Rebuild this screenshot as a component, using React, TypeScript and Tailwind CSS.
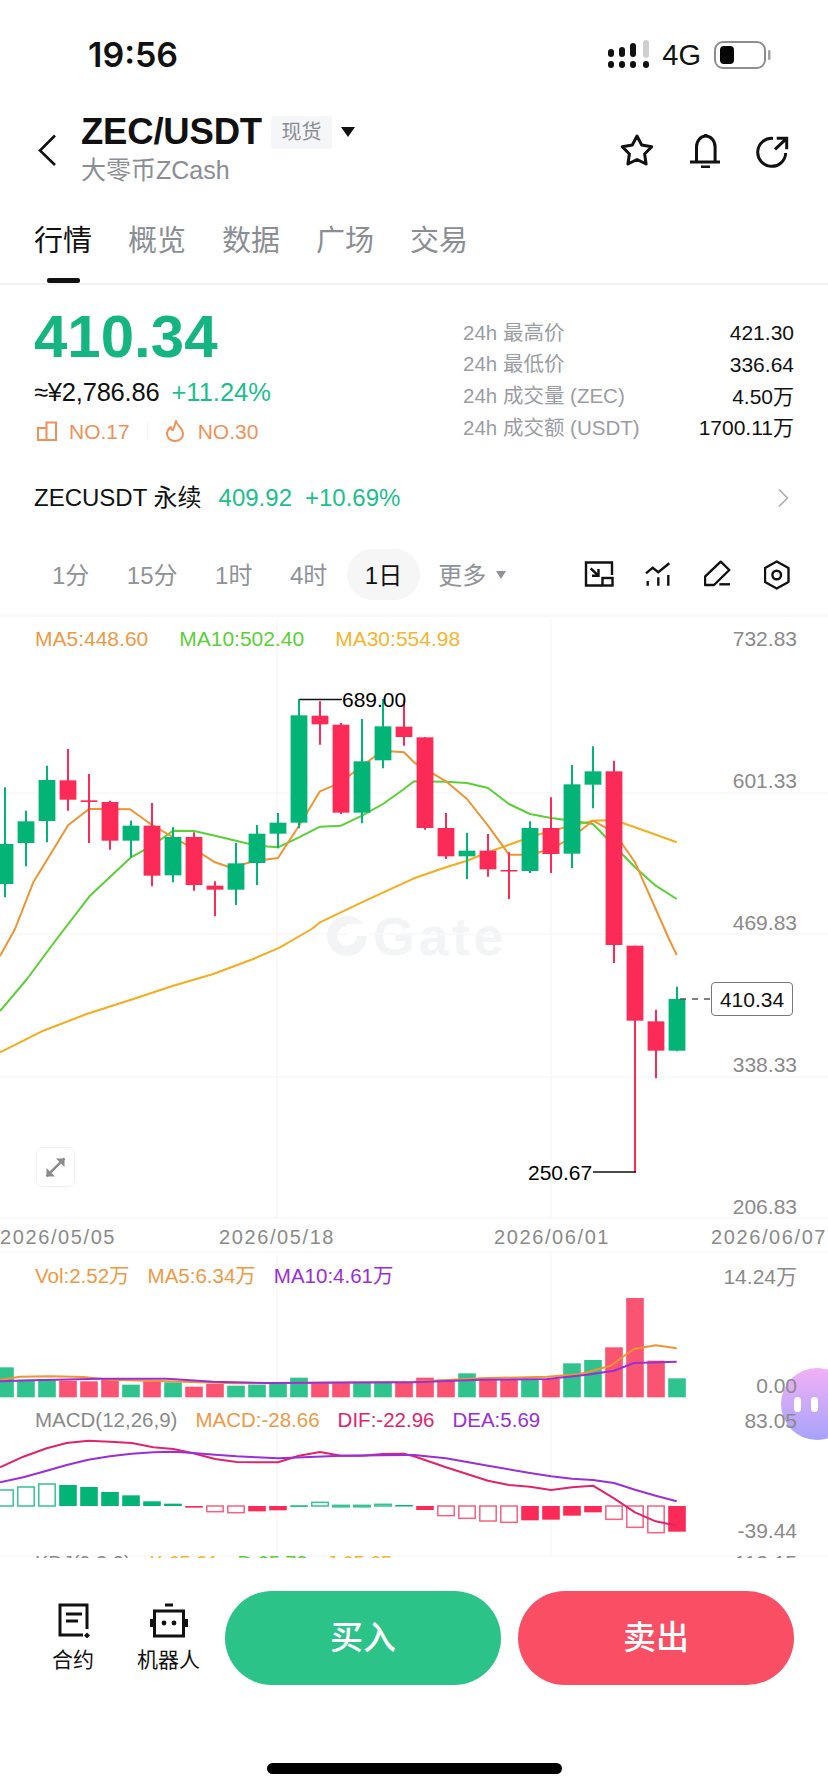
const UP = "#02b576"
const DOWN = "#fb2a57"
const VOL_UP = "#2fc48d"
const VOL_DOWN = "#fb5372"

// sampled off the 3x crops: x/3 + ox, y/3 + oy
type Pt = [number, number]
const toPath = (list: Pt[], ox = 0, oy = 620) =>
  list.map(([x, y]) => `${(x / 3 + ox).toFixed(1)},${(y / 3 + oy).toFixed(1)}`).join(" ")

const join = (left: Pt[], right: Pt[], oy: number) => `${toPath(left, 0, oy)} ${toPath(right, 414, oy)}`

// up, wick top, body top, body bottom, wick bottom
const candles: [boolean, number, number, number, number][] = [
  [true, 505, 675, 795, 835],
  [true, 575, 607, 672, 742],
  [true, 440, 483, 606, 670],
  [false, 390, 484, 542, 575],
  [false, 465, 544, 549, 672],
  [false, 545, 549, 665, 692],
  [true, 605, 620, 665, 715],
  [false, 552, 620, 770, 802],
  [true, 625, 654, 769, 790],
  [false, 640, 654, 798, 815],
  [false, 787, 800, 812, 892],
  [true, 672, 733, 812, 858],
  [true, 618, 644, 732, 798],
  [true, 582, 611, 644, 688],
  [true, 240, 289, 611, 628],
  [false, 247, 290, 316, 377],
  [false, 312, 317, 581, 585],
  [true, 300, 427, 581, 613],
  [true, 240, 322, 424, 448],
  [false, 245, 323, 354, 380],
  [false, 355, 355, 627, 632],
  [false, 582, 627, 712, 720],
  [true, 642, 695, 712, 780],
  [false, 645, 695, 751, 773],
  [false, 700, 753, 757, 840],
  [true, 607, 627, 756, 762],
  [false, 535, 627, 705, 762],
  [true, 438, 496, 704, 748],
  [true, 382, 457, 497, 568],
  [false, 425, 457, 978, 1032],
  [false, 980, 980, 1205, 1660],
  [false, 1172, 1207, 1295, 1378],
  [true, 1103, 1140, 1295, 1297],
]

const ma5 = `0,957 15,930 ${toPath([
  [100, 790], [205, 618], [267, 570], [330, 570], [390, 571], [456, 618], [520, 655], [582, 690], [645, 730], [690, 745], [771, 725], [834, 717], [897, 620], [960, 517], [1023, 490], [1086, 440], [1149, 395], [1212, 400],
])} ${toPath([
  [0, 430], [96, 487], [159, 540], [222, 620], [285, 707], [348, 707], [411, 690], [474, 655], [537, 605], [600, 640], [663, 730], [765, 960], [788, 1008],
], 414)}`

const ma10 = `0,1012 27,980 ${toPath([
  [170, 960], [270, 830], [393, 715], [456, 680], [519, 635], [582, 636], [645, 650], [708, 665], [771, 680], [834, 685], [897, 655], [960, 623], [1023, 620], [1086, 590], [1149, 555], [1212, 510],
])} ${toPath([
  [0, 487], [96, 488], [159, 492], [222, 507], [285, 555], [348, 585], [411, 597], [474, 605], [537, 615], [600, 680], [663, 745], [725, 800], [788, 840],
], 414)}`

const ma30 = `${toPath([
  [0, 370], [130, 305], [260, 255], [400, 210], [520, 170], [640, 135], [760, 90], [840, 55], [935, 0],
], 0, 930)} ${toPath([
  [960, 910], [1085, 850],
])} ${toPath([
  [0, 778], [96, 745], [159, 725], [222, 700], [285, 677], [348, 655], [411, 635], [474, 620], [537, 605], [600, 603], [663, 625], [788, 670],
], 414)}`

const volumes: [boolean, number][] = [
  [true, 445], [true, 482], [true, 480], [false, 485], [false, 487], [false, 480], [true, 497], [false, 487], [true, 490], [false, 503], [false, 495], [true, 500], [true, 497], [true, 495], [true, 476], [false, 490], [false, 492], [true, 492], [true, 490], [false, 490],
  [false, 476], [false, 482], [true, 463], [false, 482], [false, 483], [true, 483], [false, 480], [true, 433], [true, 423], [false, 385], [false, 237], [false, 425], [true, 478],
]

const volMa5 = join(
  [[0, 482], [60, 473], [150, 472], [250, 474], [330, 482], [450, 485], [600, 490], [700, 493], [860, 492], [1242, 488]],
  [[200, 478], [400, 473], [500, 465], [590, 440], [625, 415], [660, 390], [725, 379], [788, 388]],
  1220,
)
const volMa10 = join(
  [[0, 487], [100, 484], [300, 479], [500, 479], [640, 488], [800, 492], [1242, 490]],
  [[200, 482], [400, 480], [520, 467], [600, 455], [660, 432], [788, 428]],
  1220,
)
const dif = join(
  [[0, 745], [70, 713], [140, 688], [200, 672], [265, 665], [330, 668], [395, 672], [460, 685], [520, 690], [580, 703], [645, 720], [710, 729], [770, 730], [834, 730], [897, 710], [960, 699], [1023, 710], [1086, 710], [1149, 705], [1212, 704]],
  [[0, 712], [96, 745], [222, 785], [285, 798], [348, 803], [411, 813], [474, 805], [537, 800], [600, 838], [663, 880], [725, 907], [788, 920]],
  1220,
)
const dea = join(
  [[0, 790], [70, 775], [140, 755], [200, 738], [265, 722], [330, 712], [395, 704], [460, 700], [520, 698], [580, 702], [645, 707], [710, 712], [770, 715], [834, 718], [1023, 710], [1212, 708]],
  [[0, 708], [96, 718], [222, 740], [348, 762], [411, 772], [474, 779], [537, 783], [600, 792], [663, 812], [725, 830], [788, 847]],
  1220,
)

// up, hollow, far edge (the zero line is at 861)
const macd: [boolean, boolean, number][] = [
  [true, true, 813], [true, true, 804], [true, true, 795], [true, false, 798], [true, false, 804], [true, false, 819], [true, false, 829], [true, false, 847], [true, false, 854], [false, false, 866], [false, true, 878], [false, true, 881], [false, false, 877], [false, false, 874], [true, false, 859], [true, true, 850], [true, true, 859], [true, true, 859], [true, true, 856], [true, false, 858],
  [false, false, 873], [false, true, 890], [false, true, 898], [false, true, 906], [false, true, 910], [false, false, 904], [false, false, 902], [false, false, 890], [false, false, 880], [false, true, 901], [false, true, 925], [false, true, 941], [false, false, 938],
]

function ChartDrawing() {
  return (
    <svg className="absolute inset-0" width="828" height="941" viewBox="0 618 828 941" fill="none">
      <g stroke="#f8f8f9" strokeWidth="1.5">
        <path d="M0 794H828M0 935H828M0 1078H828M0 1219H828M0 1253H828M0 1557H828" />
        <path d="M277 620V1219M551 620V1219M277 1253V1557M551 1253V1557" />
      </g>
      <circle cx="347" cy="937" r="15" stroke="#f3f4f5" strokeWidth="10" />
      <rect x="347" y="925" width="22" height="12" fill="#ffffff" />

      <polyline points={ma30} stroke="#f5ac1e" strokeWidth="2" strokeLinejoin="round" />
      <polyline points={ma10} stroke="#5bcf36" strokeWidth="2" strokeLinejoin="round" />
      <polyline points={ma5} stroke="#ee9433" strokeWidth="2" strokeLinejoin="round" />

      {candles.map(([up, wt, bt, bb, wb], i) => {
        const x = 5 + 21 * i
        const color = up ? UP : DOWN
        return (
          <g key={i}>
            <line x1={x} x2={x} y1={620 + wt / 3} y2={620 + wb / 3} stroke={color} strokeWidth="2" />
            <rect x={x - 8.4} y={620 + bt / 3} width="16.8" height={Math.max((bb - bt) / 3, 1.5)} fill={color} />
          </g>
        )
      })}

      <path d="M299 700.5H342M593 1173H636" stroke="#111111" strokeWidth="1.5" />
      <path d="M299 700.5V712" stroke={UP} strokeWidth="2" />
      <path d="M680 1000H711" stroke="#555555" strokeWidth="1.5" strokeDasharray="6 6" />

      {volumes.map(([up, top], i) => (
        <rect key={i} x={5 + 21 * i - 8.8} y={1220 + top / 3} width="17.6" height={(535 - top) / 3} fill={up ? VOL_UP : VOL_DOWN} />
      ))}
      <polyline points={volMa5} stroke="#ee9433" strokeWidth="2" strokeLinejoin="round" />
      <polyline points={volMa10} stroke="#9a2fd6" strokeWidth="2" strokeLinejoin="round" />

      {macd.map(([up, hollow, edge], i) => {
        const top = Math.min(edge, 861)
        const h = Math.max(Math.abs(edge - 861) / 3, 1.5)
        const color = up ? UP : DOWN
        return hollow ? (
          <rect key={i} x={5 + 21 * i - 8.2} y={1220 + top / 3} width="16.4" height={h} stroke={up ? "#35c493" : "#f5617f"} strokeWidth="1.5" fill="#ffffff" />
        ) : (
          <rect key={i} x={5 + 21 * i - 8.8} y={1220 + top / 3} width="17.6" height={h} fill={color} />
        )
      })}
      <polyline points={dif} stroke="#e0246c" strokeWidth="2" strokeLinejoin="round" />
      <polyline points={dea} stroke="#9a2fd6" strokeWidth="2" strokeLinejoin="round" />
    </svg>
  )
}

function StatusIcons() {
  return (
    <div className="flex items-center">
      <svg width="42" height="30" viewBox="606 41 42 30">
        <rect x="641" y="41" width="6" height="18" rx="3" fill="#cfcfcf" />
        <rect x="628" y="44" width="6" height="14" rx="3" fill="#111" />
        <rect x="617" y="48" width="6" height="10" rx="3" fill="#111" />
        <rect x="606" y="50" width="6" height="8" rx="3" fill="#111" />
        <rect x="606" y="62" width="6" height="7" rx="3" fill="#111" />
        <rect x="617" y="62" width="6" height="7" rx="3" fill="#111" />
        <rect x="628" y="62" width="6" height="7" rx="3" fill="#111" />
        <rect x="641" y="62" width="6" height="7" rx="3" fill="#111" />
      </svg>
      <span className="ml-[12px] text-[29px] leading-none text-[#111]">4G</span>
      <svg className="ml-[13px]" width="57" height="28" viewBox="0 0 57 28">
        <rect x="1" y="1" width="50" height="26" rx="8" fill="none" stroke="#8e8e8e" strokeWidth="2" />
        <rect x="6" y="5" width="14" height="18" rx="4" fill="#050505" />
        <rect x="54" y="9" width="2.5" height="10" rx="1.2" fill="#a0a0a0" />
      </svg>
    </div>
  )
}

function HeaderIcons() {
  return (
    <div className="flex items-center gap-[32px] pr-[37px]">
      <svg width="36" height="36" viewBox="0 0 36 36" fill="none" stroke="#111" strokeWidth="3" strokeLinejoin="round">
        <path d="M18 4L22.7 13L32.7 14.7L25.6 22L27.1 32L18 27.5L8.9 32L10.4 22L3.3 14.7L13.3 13Z" />
      </svg>
      <svg width="36" height="36" viewBox="0 0 36 36" fill="none" stroke="#111" strokeWidth="3">
        <path d="M9.5 30V15a9.3 11 0 0 1 18.6 0V30" />
        <path d="M3 30H33M14 35H23M18.7 2V4.5" />
      </svg>
      <svg width="36" height="36" viewBox="0 0 36 36" fill="none" stroke="#111" strokeWidth="3">
        <path d="M18 6.4A14 14 0 1 0 30.7 21" />
        <path d="M20 17.3L31.7 6.3M21.7 6.3H31.7V17.3" />
      </svg>
    </div>
  )
}

function ToolIcons() {
  return (
    <div className="ml-auto flex items-center gap-[30px] pr-[34px]">
      <svg width="30" height="30" viewBox="0 0 30 30" fill="none" stroke="#111" strokeWidth="2.4">
        <path d="M18 25.5H2V2.5H28V15" />
        <rect x="18.5" y="18" width="10" height="7.5" />
        <path d="M6.7 8.3L14.3 15.7M8 15.7H14.5V9" />
      </svg>
      <svg width="30" height="30" viewBox="0 0 30 30" fill="none" stroke="#111" strokeWidth="2.4">
        <path d="M2 13.3L8.7 7.7L14.3 12.3L25.3 3.3" />
        <path d="M3.7 21V25.7M14.3 17.3V25.7M24.3 15V25.7" />
      </svg>
      <svg width="30" height="30" viewBox="0 0 30 30" fill="none" stroke="#111" strokeWidth="2.4" strokeLinejoin="round">
        <path d="M1 25V16.7L16.7 1.7L25.3 10L10 25Z" />
        <path d="M15.3 24.3H26" />
      </svg>
      <svg width="30" height="30" viewBox="0 0 30 30" fill="none" stroke="#111" strokeWidth="2.4" strokeLinejoin="round">
        <path d="M12.7 1.5L24.5 8V22L12.7 28.5L1 22V8Z" />
        <circle cx="12.7" cy="15" r="4.3" />
      </svg>
    </div>
  )
}

const stats = [
  ["24h 最高价", "421.30"],
  ["24h 最低价", "336.64"],
  ["24h 成交量 (ZEC)", "4.50万"],
  ["24h 成交额 (USDT)", "1700.11万"],
]

const intervals = ["1分", "15分", "1时", "4时"]

export default function App() {
  return (
    <div className="relative h-[1792px] w-[828px] overflow-hidden bg-white font-['Liberation_Sans','Noto_Sans_CJK_SC',sans-serif] text-[#111]">
      <div className="flex h-[110px] items-center justify-between pr-[57px] pl-[88px]">
        <span className="font-['Inter',sans-serif] text-[34px] leading-none font-semibold">19:56</span>
        <StatusIcons />
      </div>

      <div className="flex h-[80px] items-center justify-between">
        <div className="flex items-center">
          <svg className="ml-[37px]" width="20" height="32" viewBox="0 0 20 32" fill="none" stroke="#111" strokeWidth="2.6">
            <path d="M18 1.5L3 16.5L18 31" />
          </svg>
          <div className="ml-[24px] flex flex-col">
            <div className="-mt-[3px] flex h-[40px] items-center">
              <span className="text-[36.5px] leading-none font-bold tracking-[-0.2px]">ZEC/USDT</span>
              <span className="ml-[9px] flex h-[33px] w-[61px] items-center justify-center rounded-[4px] bg-[#f5f6f7] text-[20px] text-[#8a8e94]">现货</span>
              <span className="ml-[9px] h-0 w-0 border-x-[7px] border-t-[10px] border-x-transparent border-t-[#111]" />
            </div>
            <span className="mt-[3px] text-[25px] leading-[30px] text-[#8a8e94]">大零币ZCash</span>
          </div>
        </div>
        <HeaderIcons />
      </div>

      <div className="relative h-[95px] border-b-2 border-[#f3f3f4]">
        <div className="flex gap-[36px] pt-[35px] pl-[34px] text-[29px] leading-[32px] text-[#8a8e94]">
          <span className="text-[#111]">行情</span>
          <span>概览</span>
          <span>数据</span>
          <span>广场</span>
          <span>交易</span>
        </div>
        <div className="ml-[47px] mt-[21px] h-[5px] w-[33px] rounded-[2px] bg-[#111]" />
      </div>

      <div className="flex h-[188px] justify-between pr-[34px] pl-[34px]">
        <div className="flex flex-col">
          <span className="mt-[24px] h-[56px] text-[60px] leading-[56px] font-bold text-[#14b581]">410.34</span>
          <div className="mt-[14px] flex h-[28px] items-center gap-[12px] text-[25.5px] leading-none">
            <span className="tracking-[-0.2px]">≈¥2,786.86</span>
            <span className="text-[#1cbf8b]">+11.24%</span>
          </div>
          <div className="mt-[12px] flex h-[24px] items-center text-[21px] leading-none text-[#f0905a]">
            <svg className="ml-[3px]" width="20" height="20" viewBox="0 0 20 20" fill="none" stroke="#f0905a" strokeWidth="2">
              <path d="M1 19V7H9.5V19ZM9.5 19V1.5H19V19H1" />
            </svg>
            <span className="ml-[12px]">NO.17</span>
            <span className="ml-[17px] h-[18px] w-[1px] bg-[#f3f3f4]" />
            <svg className="ml-[17px]" width="20" height="22" viewBox="0 0 20 22" fill="none" stroke="#f0905a" strokeWidth="2" strokeLinejoin="round">
              <path d="M11 1C11.5 5 17.5 8 18 13.5C18.3 18 14.5 21 10 21C5.5 21 2 18 2 13.5C2 10.5 4 8.5 5.5 7C6 9 7 10 8 10C9.5 7.5 10 4 11 1Z" />
            </svg>
            <span className="ml-[13px]">NO.30</span>
          </div>
        </div>
        <div className="w-[331px] pt-[32px]">
          {stats.map(([label, value]) => (
            <div key={label} className="flex h-[31.7px] items-center justify-between text-[20.5px] leading-none">
              <span className="text-[#9a9da3]">{label}</span>
              <span className="text-[21px]">{value}</span>
            </div>
          ))}
        </div>
      </div>

      <div className="flex h-[50px] items-center pr-[39px] pl-[34px] text-[24px]">
        <span>ZECUSDT 永续</span>
        <span className="ml-[17px] text-[#1cbf8b]">409.92</span>
        <span className="ml-[13px] text-[#1cbf8b]">+10.69%</span>
        <svg className="ml-auto" width="12" height="20" viewBox="0 0 12 20" fill="none" stroke="#a8abb0" strokeWidth="1.6">
          <path d="M2 1.5L10.5 10L2 18.5" />
        </svg>
      </div>

      <div className="mt-[26px] flex h-[51px] items-center gap-[1.5px] pl-[34px] text-[24px] text-[#8f9399]">
        {intervals.map((t) => (
          <span key={t} className="px-[18px] pt-[2px]">{t}</span>
        ))}
        <span className="flex h-[51px] items-center rounded-full bg-[#f6f6f6] px-[18px] pt-[2px] text-[#111]">1日</span>
        <span className="ml-[0.5px] pt-[2px] pl-[16px]">更多</span>
        <span className="ml-[8px] h-0 w-0 border-x-[5px] border-t-[8px] border-x-transparent border-t-[#8f9399]" />
        <ToolIcons />
      </div>

      <div className="mt-[14px] h-[3px] bg-[#f9f9fa]" />

      <div className="relative h-[941px] overflow-hidden">
        <span className="absolute top-[288px] left-[373px] text-[54px] leading-[62px] font-bold tracking-[3.5px] text-[#f3f4f5]">Gate</span>
        <ChartDrawing />
        <div className="absolute top-[751px] left-[781px] flex h-[72px] w-[72px] items-center gap-[10px] rounded-full bg-linear-to-b from-[#f2b0f6] to-[#a5a2f9] pl-[13px]">
          <span className="h-[15px] w-[7px] rounded-full bg-white" />
          <span className="h-[15px] w-[7px] rounded-full bg-white" />
        </div>

        <div className="absolute top-[10px] left-[35px] flex gap-[31px] text-[21px] leading-[24px]">
          <span className="text-[#ee9a45]">MA5:448.60</span>
          <span className="text-[#5bcf36]">MA10:502.40</span>
          <span className="text-[#f5b52e]">MA30:554.98</span>
        </div>
        <span className="absolute top-[71px] left-[342px] text-[21px] leading-[24px] text-black">689.00</span>
        <span className="absolute top-[544px] left-[528px] text-[21px] leading-[24px] text-black">250.67</span>
        <div className="absolute top-[10px] right-[31px] flex h-[592px] flex-col justify-between text-right text-[21px] leading-[24px] text-[#8a8a8a]">
          <span>732.83</span>
          <span>601.33</span>
          <span>469.83</span>
          <span>338.33</span>
          <span>206.83</span>
        </div>
        <div className="absolute top-[365px] left-[711px] flex h-[34px] w-[82px] items-center justify-center rounded-[4px] border border-[#777] bg-white text-[21px] leading-none">410.34</div>
        <div className="absolute top-[530px] left-[36px] flex h-[40px] w-[39px] items-center justify-center rounded-[7px] border border-[#f1f1f1] bg-white">
          <svg width="39" height="40" viewBox="0 0 39 40" fill="#8a8a8a" stroke="#8a8a8a" strokeWidth="0">
            <path d="M10 30L29 11" strokeWidth="2.6" />
            <path d="M20 11H29V20ZM10 21V30H19Z" />
          </svg>
        </div>

        <div className="absolute top-[608px] left-0 flex w-full justify-between text-[20px] leading-[24px] tracking-[1.6px] text-[#8a8a8a]">
          <span className="w-[219px]">2026/05/05</span>
          <span className="w-[275px]">2026/05/18</span>
          <span className="w-[217px]">2026/06/01</span>
          <span className="w-[117px]">2026/06/07</span>
        </div>

        <div className="absolute top-[647px] left-[35px] flex gap-[18px] text-[20.5px] leading-[24px]">
          <span className="text-[#ee9a45]">Vol:2.52万</span>
          <span className="text-[#ee9a45]">MA5:6.34万</span>
          <span className="text-[#9a2fd6]">MA10:4.61万</span>
        </div>
        <span className="absolute top-[648px] right-[31px] text-[21px] leading-[24px] text-[#8a8a8a]">14.24万</span>
        <span className="absolute top-[757px] right-[31px] text-[21px] leading-[24px] text-[#8a8a8a]">0.00</span>

        <div className="absolute top-[791px] left-[35px] flex gap-[18px] text-[20.5px] leading-[24px]">
          <span className="text-[#8a8a8a]">MACD(12,26,9)</span>
          <span className="text-[#ee9a45]">MACD:-28.66</span>
          <span className="text-[#e0246c]">DIF:-22.96</span>
          <span className="text-[#9a2fd6]">DEA:5.69</span>
        </div>
        <span className="absolute top-[792px] right-[31px] text-[21px] leading-[24px] text-[#8a8a8a]">83.05</span>
        <span className="absolute top-[902px] right-[31px] text-[21px] leading-[24px] text-[#8a8a8a]">-39.44</span>

        <div className="absolute top-[934px] left-[35px] flex gap-[19px] text-[20px] leading-[24px]">
          <span className="text-[#8a8a8a]">KDJ(9,3,3)</span>
          <span className="text-[#f5b52e]">K:65.21</span>
          <span className="text-[#5bcf36]">D:65.73</span>
          <span className="text-[#f5b52e]">J:65.65</span>
        </div>
        <span className="absolute top-[934px] right-[31px] text-[21px] leading-[24px] text-[#8a8a8a]">112.15</span>
      </div>

      <div className="flex pt-[33px] pl-[52px]">
        <div className="flex h-[94px] w-[42px] flex-col items-center pt-[11px]">
          <svg width="36" height="36" viewBox="0 0 36 36" fill="none" stroke="#111" strokeWidth="3">
            <path d="M32 27V3H5V33H28" />
            <path d="M11 12H27M11 19H23" />
            <path d="M32 30.5L35 33.5L32 36.5L29 33.5Z" fill="#111" stroke="none" />
          </svg>
          <span className="mt-[10px] whitespace-nowrap text-[21px] leading-[24px]">合约</span>
        </div>
        <div className="ml-[43px] flex h-[94px] w-[63px] flex-col items-center pt-[11px]">
          <svg width="40" height="36" viewBox="0 0 40 36" fill="none" stroke="#111" strokeWidth="3">
            <rect x="5.5" y="9" width="29" height="25" />
            <path d="M16 3H24" />
            <path d="M2.5 17V25M37.5 17V25" />
            <circle cx="15" cy="21" r="2.4" fill="#111" stroke="none" />
            <circle cx="25" cy="21" r="2.4" fill="#111" stroke="none" />
          </svg>
          <span className="mt-[10px] whitespace-nowrap text-[21px] leading-[24px]">机器人</span>
        </div>
        <button type="button" className="ml-[25px] flex h-[94px] w-[276px] items-center justify-center rounded-full bg-[#2cc388] text-[33px] font-medium text-white">买入</button>
        <button type="button" className="ml-[17px] flex h-[94px] w-[276px] items-center justify-center rounded-full bg-[#f94e63] text-[33px] font-medium text-white">卖出</button>
      </div>

      <div className="ml-[267px] mt-[78px] h-[11px] w-[295px] rounded-full bg-black" />
    </div>
  )
}
